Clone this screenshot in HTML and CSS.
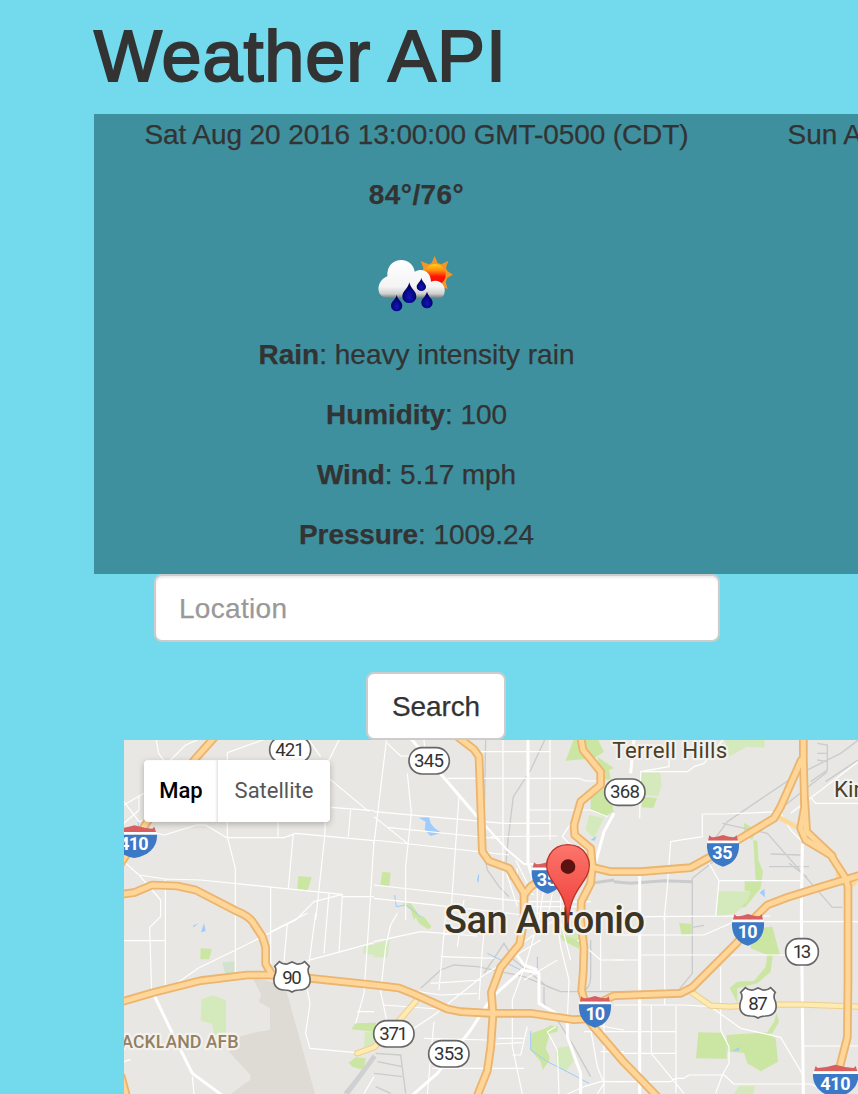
FILE: index.html
```html
<!DOCTYPE html>
<html lang="en">
<head>
<meta charset="utf-8">
<title>Weather API</title>
<link rel="stylesheet" href="styles.css">
</head>
<body>
<main class="container">
  <h1 class="title">Weather API</h1>
  <section class="forecast">
    <div class="day">
      <p class="date">Sat Aug 20 2016 13:00:00 GMT-0500 (CDT)</p>
      <p class="temps"><strong>84°/76°</strong></p>
      <svg class="weather-icon" viewBox="0 0 330 300" aria-label="Rain">
        <defs>
          <linearGradient id="sun" x1="0" y1="0" x2="0" y2="1"><stop offset="0" stop-color="#ffd21c"/><stop offset=".3" stop-color="#ff8c0c"/><stop offset=".6" stop-color="#ff1205"/><stop offset="1" stop-color="#f60d05"/></linearGradient>
          <linearGradient id="cloud" gradientUnits="userSpaceOnUse" x1="0" y1="75" x2="0" y2="190"><stop offset="0" stop-color="#fff"/><stop offset=".7" stop-color="#f4f4f4"/><stop offset=".88" stop-color="#cfcfcf"/><stop offset="1" stop-color="#6f7777"/></linearGradient>
          <radialGradient id="drop" cx=".5" cy=".7" r=".5"><stop offset="0" stop-color="#1216bd"/><stop offset="1" stop-color="#020268"/></radialGradient>
        </defs>
        <path d="M224 63L233 84Q240 86 244 88L265 77L258 99L262 108L279 119L262 128L257 141L263 163L240 150L224 158L206 150L184 158L191 138L186 119L190 99L182 78L206 88L215 84Z" fill="#f0962a"/>
        <circle cx="225" cy="119" r="32" fill="url(#sun)"/>
        <path d="M78 188C48 185 47 138 82 124C78 62 158 60 164 110C186 98 212 108 213 140C238 130 258 152 254 170C252 188 242 190 225 190H88Z" fill="url(#cloud)"/>
        <g fill="url(#drop)">
          <path d="M148 142c4 20 21 25 21 43a21 19 0 0 1-42 0c0-18 17-23 21-43z"/>
          <path d="M184 129c3 13 14 17 14 26a14 13 0 0 1-28 0c0-9 11-13 14-26z"/>
          <path d="M110 180c4 16 17 19 17 32a17 17 0 0 1-34 0c0-13 13-16 17-32z"/>
          <path d="M201 170c4 16 17 20 17 33a17 17 0 0 1-34 0c0-13 13-17 17-33z"/>
        </g>
      </svg>
      <p class="rain"><strong>Rain</strong>: heavy intensity rain</p>
      <p class="humidity"><strong>Humidity</strong>: 100</p>
      <p class="wind"><strong>Wind</strong>: 5.17 mph</p>
      <p class="pressure"><strong>Pressure</strong>: 1009.24</p>
    </div>
    <div class="day next">
      <p class="date">Sun Aug 21 2016 13:00:00 GMT-0500 (CDT)</p>
    </div>
  </section>
  <form class="search">
    <input class="location" type="text" placeholder="Location" aria-label="Location">
    <button class="submit" type="button">Search</button>
  </form>
</main>
<section class="map">
  <svg class="map-canvas" viewBox="0 0 2202 1062">
    <defs>
      <g id="interstate">
        <path d="M-45 17L-41 1L-35 6Q-20 8 0 0Q20 8 35 6L41 1L45 17Z" fill="#d75f5f"/>
        <rect x="-47" y="17" width="94" height="8" fill="#fff"/>
        <path d="M-48 25H48C50 62 33 86 0 95C-33 86-50 62-48 25Z" fill="#3b78c6"/>
      </g>
      <g id="interstate-wide">
        <path d="M-65 17L-60 1L-54 7Q-30 6 0-3Q30 6 54 7L60 1L65 17Z" fill="#d75f5f"/>
        <rect x="-67" y="17" width="134" height="8" fill="#fff"/>
        <path d="M-68 25H68C70 62 43 88 0 95C-43 88-70 62-68 25Z" fill="#3b78c6"/>
      </g>
      <path id="us" d="M-38-46Q-28-37-14-39L0-45L14-39Q28-37 38-46L52-32Q44-20 52-5C60 22 48 38 22 39Q8 39 0 45Q-8 39-22 39C-48 38-60 22-52-5Q-44-20-52-32Z" fill="#fff" stroke="#666" stroke-width="5"/>
      <linearGradient id="pin" x1="0" y1="0" x2="0" y2="1"><stop offset="0" stop-color="#fc756b"/><stop offset="1" stop-color="#ee3b36"/></linearGradient>
      <g id="highways">
        <path d="M275-12L215 55L70 245L0 355L-20 385"/>
        <path d="M-10 463L30 458L85 435L160 438L215 450L335 512Q380 530 390 552L415 590L425 622V672L445 705"/>
        <path d="M-10 786L90 757L230 722L370 705H440L560 715L750 735L825 744L870 762L970 807L1010 815L1100 820H1220L1350 839L1390 837L1410 862L1500 967L1610 1080"/>
        <path d="M1000-10L1050 28L1065 50L1068 130L1075 335L1095 363L1155 385L1200 460V540L1187 612L1130 682L1102 757L1107 822L1100 922L1090 992L1060 1067"/>
        <path d="M1370-10L1377 30L1430 95V135L1370 185L1350 255L1352 285L1400 325L1405 375L1400 430L1372 485L1370 540L1380 622L1378 692L1373 752L1390 812L1410 862"/>
        <path d="M1200 465L1220 440L1300 385L1405 382L1460 395H1550L1700 383L1760 350L1850 295L1950 235L1970 200L2032 60"/>
        <path d="M2038-10V60L2042 200L2030 265L2045 300L2120 345L2165 415L2172 440V722L2170 892L2145 990"/>
        <path d="M2042 180L2048 275L2125 348"/>
        <path d="M2220 402L2100 438L1990 472L1930 495L1895 530L1840 607L1705 742L1670 760L1470 767L1440 782L1400 825"/>
        <path d="M-8 1010L8 1070"/>
      </g>
      <g id="majors">
        <path d="M1700 755L1760 797L1820 800L1900 794H2040L2210 800"/>
        <path d="M875 784L825 842L750 922L700 940"/>
      </g>
    </defs>
    <rect width="2202" height="1062" fill="#e8e7e3"/>
    <g fill="#dedad4">
      <path d="M385 712L440 725L485 745L573 1062H320L378 1020L380 1006L315 935L345 890L395 877L438 870V805L405 785L412 765Z"/>
    </g>
    <g fill="#cbe6a3">
      <path d="M523 408L563 412L551 450L520 448Z"/><path d="M230 625L264 627L255 658H229Z"/>
      <path fill="#d3e2cf" d="M295 667L332 664V700H303Z"/>
      <path fill="#d5eabc" d="M232 778L266 766L306 780V882L270 884L265 852L230 842Z"/>
      <path d="M775 395L800 398L796 438L769 434Z"/><path d="M836 488L860 490L882 520L870 540L860 510Z"/>
      <path d="M1350-5H1420L1440 35L1410 55L1325 62Z"/><path d="M1420 50L1470 85L1455 90L1460 118L1435 120Z"/>
      <path d="M1400 175L1440 145L1462 150L1468 215L1440 230L1400 210Z"/><path fill="#d5eabc" d="M1395 225L1440 235L1410 295L1385 270Z"/>
      <path fill="#d5eabc" d="M1550 98L1608 97L1613 135L1603 168L1550 165ZM1800-5H1922V23L1868 20L1815 50Z"/>
      <path d="M1558 170L1599 174L1588 204L1552 202ZM1860 248L1898 270L1884 300L1860 275ZM1888 300L1900 303L1903 360L1917 395L1910 445L1865 500L1845 505L1880 455L1862 452V423L1895 422Z"/>
      <path fill="#d5eabc" d="M1783 453L1880 455L1872 480L1835 520L1776 530Z"/>
      <path fill="#d5eabc" d="M1295 540L1315 600L1365 626L1362 540ZM750 612L797 600L790 652H750ZM720 617L750 614V645L717 640Z"/>
      <path d="M1310 585L1365 600V626L1315 600ZM1665 549L1702 552V583L1673 585Z"/>
      <path d="M695 850L755 848V875L682 868ZM674 968L695 952L726 955L718 990L685 980Z"/>
      <path fill="#d5eabc" d="M722 878L750 870V930L720 920Z"/>
      <path d="M1223 880L1265 865L1280 856L1302 860L1300 875L1278 880L1265 925L1277 950L1275 962L1256 990L1250 965L1220 930Z"/>
      <path fill="#d5eabc" d="M1298 925L1335 917L1349 963L1325 995L1297 975Z"/>
      <path d="M1880 600L1900 565L1945 560L1968 645L1946 648L1940 695L1900 730L1840 745V790L1817 743L1840 725L1890 723L1925 680L1930 645L1880 625Z"/>
      <path d="M1958 820L1965 845L1945 880H1928L1950 845ZM1723 877L1790 878L1808 905L1808 956L1716 955ZM1808 885L1930 877L1955 895L1962 965L1910 994L1870 970L1860 938L1810 935Z"/>
      <path fill="#d5eabc" d="M1845 1037H1893L1888 1062H1830Z"/>
      <path d="M870 522L900 530L923 560L912 568L885 550Z"/>
    </g>
    <g fill="#9fcbfd">
      <path d="M884 233L915 232L920 250L932 265L952 278L920 288L902 270L905 245Z"/><path d="M207 557L224 549L209 562ZM231 577L240 549L245 573Z"/>
      <path d="M1400 300L1418 288L1412 302Z"/><path d="M1907 458L1921 446L1923 472ZM1825 932L1847 921L1843 932Z"/><path d="M1062 405L1066 402L1063 430L1059 420Z"/>
    </g>
    <g fill="none" stroke="#9fcbfd" stroke-width="3"><path d="M812 465L817 500L845 495L860 505L890 530M43 246V260M1220 873V930L1270 965L1320 990L1395 1030M1090 640L1190 690M1240 650V690"/></g>
    <g fill="none" stroke="#cacbcc" stroke-width="4">
      <path d="M1262 0L1220 90L1168 170L1152 300L1145 380L1160 420M1080 335L1090 390L1125 440L1155 470M1085 0L1080 260"/>
      <path d="M1770 300L1810 245L2010 110L2150 40L2210-5M1705 415L2110 95M1795 250L1930 280L2110 485L2125 502H2155M1940 342L2030 345M1935 380H2055M1995 370L2050 412M2060 125L2110 90V15L2080 10M2080 40H2110M2080 60L2110 65M2105 125L2202 60"/>
      <path d="M1705 415V700L1660 755M1705 562L1740 556"/>
      <path stroke-width="9" d="M1410 428L1470 420M1470 425L1520 430L1620 422L1705 425"/>
      <path d="M660 1060L750 950M890 745L950 690L990 675L1060 680L1200 710L1310 755L1500 755M1080 700L1140 610L1170 660L1270 740L1310 755M1400 600V710Q1400 745 1375 755M1260 740V790L1300 840L1350 920L1400 1010"/>
      <path d="M755 940L830 945L845 1060M760 965L835 980M750 1000L835 1010M755 1040L800 1060"/>
    </g>
    <path d="M668 1062L752 948" fill="none" stroke="#cfd0d1" stroke-width="14"/>
    <g fill="none" stroke="#fff" stroke-width="3.5" stroke-linejoin="round">
      <path d="M97 0L104 40L137 85M125 75L185 15L220 0M310 70V38L430-5M310 220V290L334 385V700M0 195L60 160M0 185L45 245L60 240M45 165V210L0 250M100 280L122 285L218 255H245L308 293H480L515 280L750 302M0 365L45 405L125 417L230 420L655 463L570 485L515 540L335 630L225 683L160 728M45 405L110 480V530L77 562L83 760M124 417V735M440 440V700M508 280L493 445M605 205L602 290L575 540M645 0L615 60V115L735 215M680 210L673 290M750 300L735 540L720 760L695 850M655 463L645 640M615 460L600 640M750 470L655 470M555 0L590 50M622 202L750 212M462 210V290M0 602H124M490 550L480 665M575 520L555 670M545 725L558 790L545 880L558 925L695 938M550 662L750 608M440 575L550 520M700 815H750M205 1010L210 1062M0 965L20 958M720 1060L750 1010"/>
      <path d="M788-5L750 310M850 100L862 220L845 380V540M1005 170L980 530M1137 0V540M1278 0V300M900 0L905 60M790 10L830 48H860M1060 35H1280M970 115H1365L1385 123H1430M1210 210H1400L1450 230M750 215L1140 250H1280M790 262L1130 297M750 300L1155 345M750 230L850 310M1100 290L1300 288M750 435L1200 485M750 475L1200 525M1148 400L1180 500M1175 360L1210 430M1240 420V540M1260 440L1245 540M1205 485H1400M1210 500H1360M1230 520H1370M1340 250L1315 290L1335 310L1390 330M1180 385L1180 440L1230 465M1285 460L1270 540M1310 450V540M1020 480L1000 620"/>
      <path d="M1635 20V80L1550 95L1547 235M1550 95H1690L1710 80L1740 70L1800-5M1547 425V540M1800 222H1735V290L1640 305L1630 440L1620 540M1800 222L1970 215M1755 370L1785 422H2030M1785 422L1775 530M1550 530L1940 528M2060 172L2075 190H2202M1970 220L2000 270L2040 310M2000 220L2202 65"/>
      <path d="M820 520L800 555L785 620L770 755L790 850M750 605L890 575L1060 588M965 520L945 750M950 650L1110 655M1085 525L1075 630L1065 780M760 735L950 765L1060 760M780 795L980 810M1200 685L1165 780V920L1195 1062M1250 520L1200 690M1120 895H1200M1110 912L1195 908M1165 945H1190L1210 860M900 895L1090 900M925 985H1200M910 1062L920 950L930 845M1180 620L1320 520M1310 545L1340 660M1300 550L1310 620L1335 720L1330 840M1300 660L1200 720M1395 840L1420 980L1440 1030L1420 1062M1330 840L1500 870M1380 875H1470M1430 935H1500M1330 1062L1380 1040L1430 1025H1500M1295 860L1270 875L1300 930L1305 1062M1360 600L1430 660H1500M1430 520V750M1440 850V1062M920 730L1070 720M870 865L930 825L1080 705L1250 600"/>
      <path d="M1470 585H1740L1830 545H2202M1550 645H1985M1470 660H1545M1622 520V795M1470 795H1680L1760 800L1850 865L1970 892L2040 1010M1790 680L1790 870L1815 920V970L1795 1005L1775 1060M1470 875H1655M1470 940H1655M1656 798V1060M1582 795V940L1680 1060M1470 1025H1640L1655 1015H1680L1695 1005H1800L1830 1032H2060L2110 1055M2040 918H2202"/>
    </g>
    <g fill="none" stroke="#fff" stroke-width="9" stroke-linejoin="round">
      <path d="M860-5L940 90L1060 230"/><path stroke-width="6" d="M1055 225L1150 330L1200 372H1230"/>
      <path d="M1212-5V370L1235 440M1530-5L1520 100M1470 220L1440 275L1410 385M1547 405V1062M2035 310L2032 520L2038 1062"/>
      <path d="M90 765L150 890L205 1000L300 1070"/><path d="M860 1070L940 1000L1040 870L1105 770L1195 690L1245 700V790L1330 840V890L1370 1000V1070M1175 640L1200 675L1240 690"/>
    </g>
    <use href="#majors" class="road major-case"/><use href="#majors" class="road major-fill"/>
    <path d="M1965 232L2020 262" stroke="#fed898" stroke-width="14"/><path d="M2135 390L2202 425L2190 440L2135 435Z" fill="#fed898"/>
    <use href="#highways" class="road highway-case"/><use href="#highways" class="road highway-fill"/>

    <use href="#interstate-wide" x="31" y="259"/><text class="shield-text" x="30" y="331" textLength="88">410</text>
    <use href="#interstate" x="1271" y="366"/><text class="shield-text" x="1269" y="438" textLength="61">35</text>
    <use href="#interstate" x="1797" y="285"/><text class="shield-text" x="1795" y="358" textLength="61">35</text>
    <use href="#interstate" x="1872" y="522"/><text class="shield-text" x="1871" y="595" textLength="59">10</text>
    <use href="#interstate" x="1413" y="768"/><text class="shield-text" x="1414" y="841" textLength="59">10</text>
    <use href="#interstate-wide" x="2135" y="977"/><text class="shield-text" x="2134" y="1049" textLength="91">410</text>
    <use href="#us" x="504" y="711"/><text class="route" x="504" y="731" textLength="58">90</text>
    <use href="#us" x="1902" y="789"/><text class="route" x="1902" y="809" textLength="58">87</text>
    <g fill="#fff" stroke="#666" stroke-width="5">
      <rect x="437" y="-10" width="123" height="79" rx="39"/><rect x="855" y="23" width="121" height="79" rx="39"/><rect x="1442" y="117" width="121" height="79" rx="39"/>
      <rect x="749" y="842" width="121" height="79" rx="39"/><rect x="914" y="902" width="121" height="79" rx="39"/><rect x="1985" y="596" width="98" height="79" rx="38"/>
    </g>
    <text class="route" x="498" y="49" textLength="88">421</text><text class="route" x="915" y="82" textLength="90">345</text><text class="route" x="1503" y="175" textLength="90">368</text>
    <text class="route" x="809" y="900" textLength="86">371</text><text class="route" x="975" y="961" textLength="90">353</text><text class="route" x="2034" y="655" textLength="56">13</text>
    <text class="place" x="1465" y="53" textLength="345">Terrell Hills</text>
    <text class="place" x="2130" y="171">Kirby</text>
    <text class="place base" x="-8" y="924" textLength="352">ACKLAND AFB</text>
    <text class="place city" x="960" y="580" textLength="603">San Antonio</text>
    <path d="M1332 550C1326 468 1301 451 1277 410C1252 363 1283 314 1332 314S1412 363 1387 410C1363 451 1338 468 1332 550Z" fill="url(#pin)" stroke="#b4342f" stroke-width="4"/>
    <circle cx="1332" cy="380" r="22" fill="#5c1210"/>
  </svg>
  <div class="map-types"><span class="type active">Map</span><span class="type">Satellite</span></div>
</section>
</body>
</html>
```
FILE: styles.css
```css
* { box-sizing: border-box; }
body {
  margin: 0;
  height: 1094px;
  overflow: hidden;
  background: #72daec;
  color: #333;
  font: 28px/40px "Liberation Sans", Arial, sans-serif;
}
.container { padding-left: 94px; }
.title {
  margin: 0;
  padding-top: 17px;
  height: 114px;
  font-size: 72px;
  line-height: 79px;
  font-weight: 400;
  letter-spacing: .9px;
  -webkit-text-stroke: 2px #333;
}
.forecast {
  display: flex;
  height: 460px;
  padding-top: 1px;
  overflow: hidden;
  background: #3e909e;
}
.day {
  flex: 0 0 645px;
  display: flex;
  flex-direction: column;
  align-items: center;
  white-space: nowrap;
  letter-spacing: -.1px;
  -webkit-text-stroke: .25px #333;
}
.next { margin-left: 2px; }
.day p { margin: 0 0 20px; }
.day .temps { letter-spacing: .4px; }
.day .rain { letter-spacing: 0; }
.weather-icon {
  flex: none;
  width: 110px;
  height: 100px;
  margin-right: 3px;
}
.search {
  display: flex;
  flex-direction: column;
  gap: 30px;
  width: 566px;
  margin-left: 60px;
}
.location, .submit {
  height: 68px;
  border: 2px solid #ccc;
  border-radius: 8px;
  background: #fff;
  font: inherit;
  color: #333;
  -webkit-text-stroke: .25px;
}
.location {
  width: 100%;
  padding: 14px 24px 12px 23px;
  letter-spacing: .3px;
  box-shadow: inset 0 2px 2px rgba(0, 0, 0, .075);
}
.location::placeholder { color: #999; opacity: 1; }
.submit {
  width: 140px;
  margin-left: 212px;
  padding: 2px 0 0;
  letter-spacing: -.1px;
}
.map {
  position: relative;
  width: 734px;
  height: 354px;
  margin-left: 124px;
  overflow: hidden;
}
.map-canvas { display: block; width: 734px; height: 354px; }
.road { fill: none; stroke-linejoin: round; stroke-linecap: round; }
.highway-case { stroke: #ebb56f; stroke-width: 26; }
.highway-fill { stroke: #ffd698; stroke-width: 15; }
.major-case { stroke: #ebcf91; stroke-width: 19; }
.major-fill { stroke: #ffeab0; stroke-width: 13; }
.shield-text { font: 700 54px Roboto, sans-serif; fill: #fff; text-anchor: middle; }
.route { font: 400 56px Roboto, sans-serif; fill: #333; text-anchor: middle; }
.place {
  font: 400 67px Roboto, sans-serif;
  fill: #4b4128;
  stroke: #f3f2ef;
  stroke-width: 13;
  stroke-linejoin: round;
  paint-order: stroke;
}
.base { font-size: 54px; font-weight: 500; fill: #94815f; }
.city { font-size: 114px; font-weight: 500; fill: #3d3523; }
.map-types {
  position: absolute;
  left: 20px;
  top: 20px;
  display: flex;
  height: 62px;
  background: #fff;
  border-radius: 4px;
  box-shadow: 0 2px 6px rgba(0, 0, 0, .25);
  font: 400 22px/61px Roboto, sans-serif;
  color: #565656;
}
.type { width: 112px; text-align: center; }
.active { width: 74px; font-weight: 500; color: #000; box-shadow: inset -2px 0 3px -1px rgba(0, 0, 0, .15); }
```
